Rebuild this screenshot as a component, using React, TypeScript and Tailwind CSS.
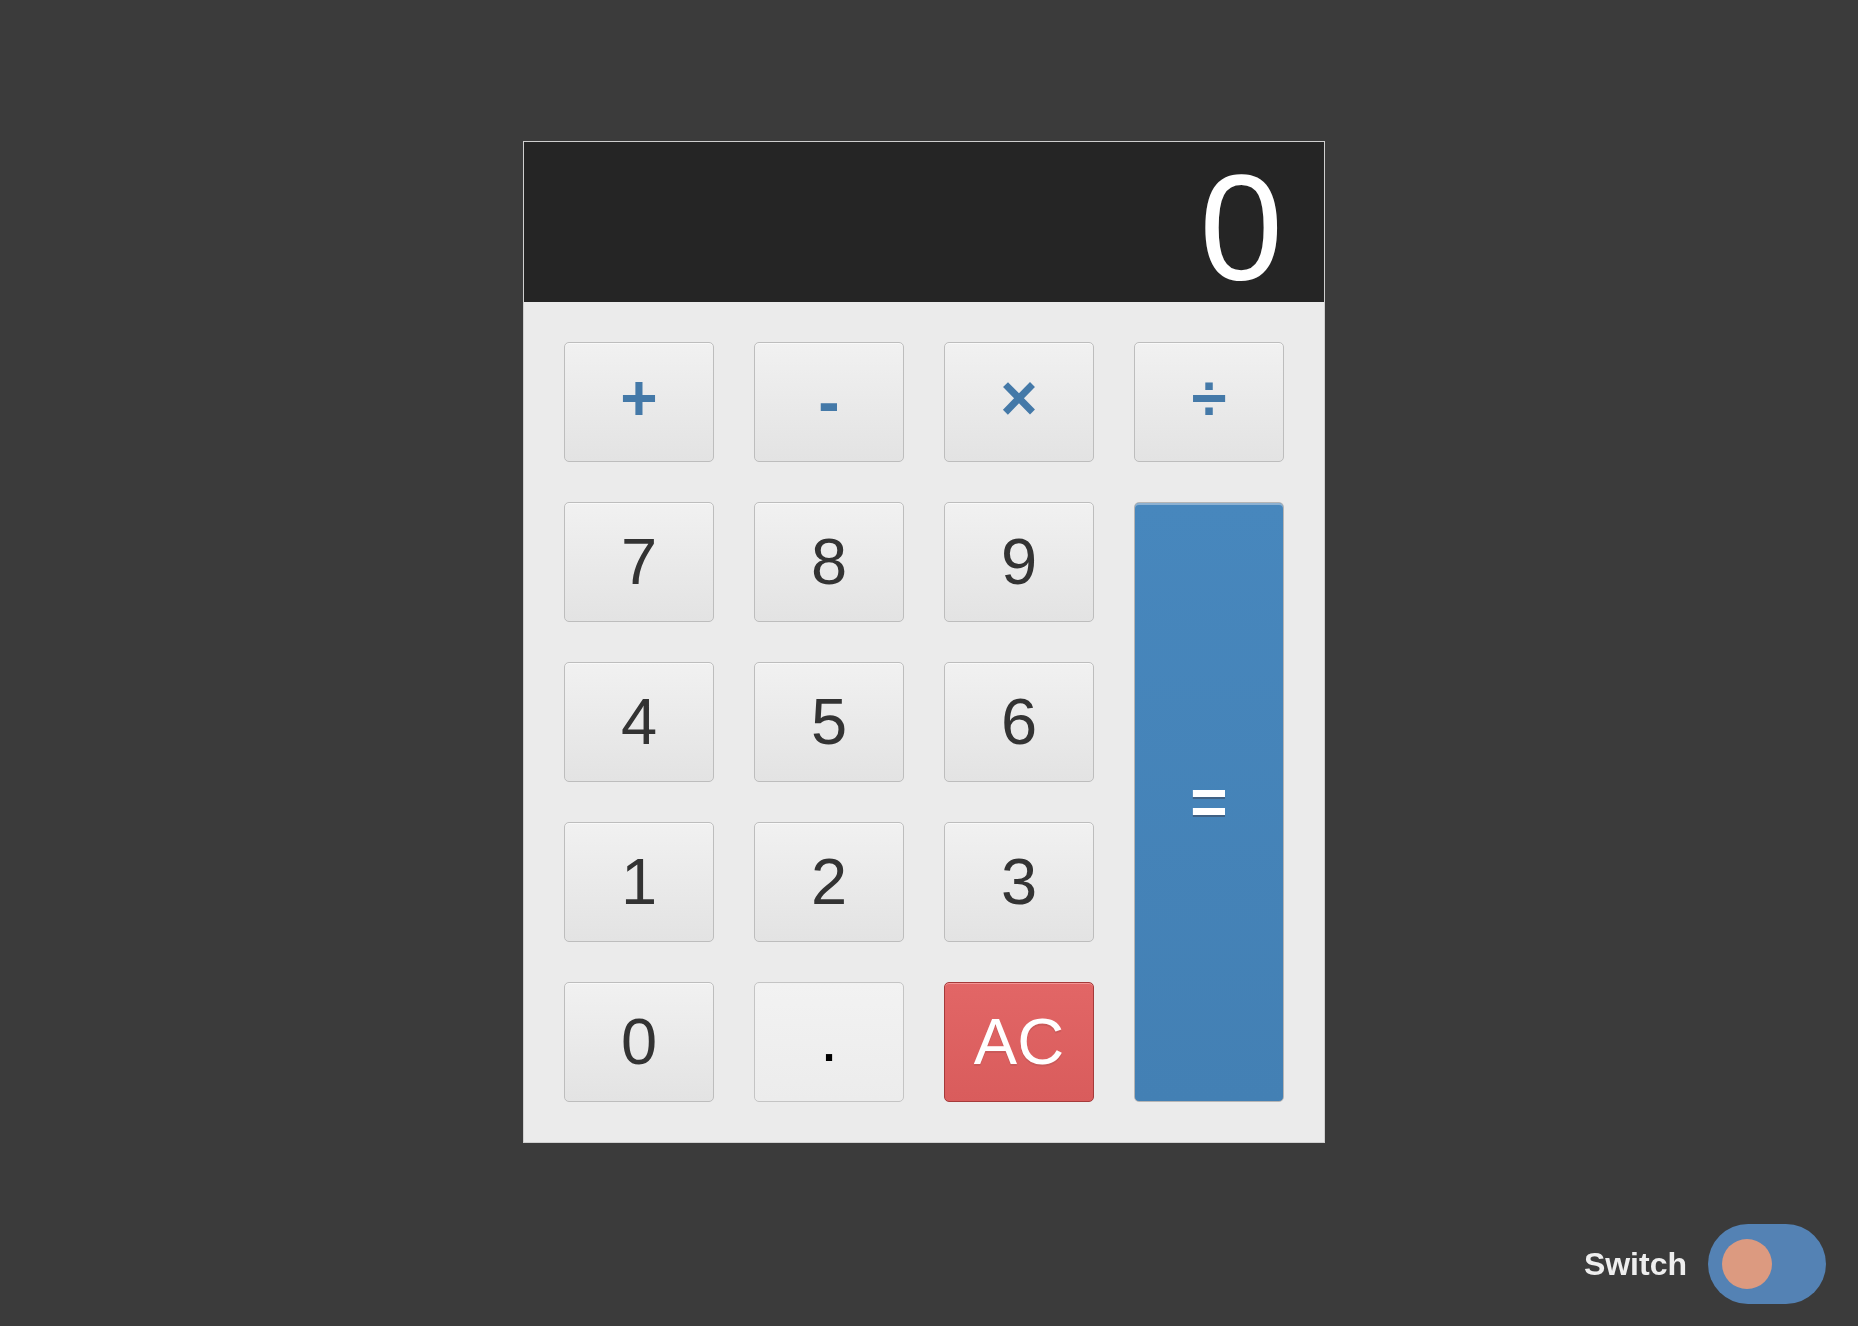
import React from "react";

const baseBtn =
  "flex items-center justify-center h-[120px] w-[150px] rounded-[5px] border border-[#bdbdbd] bg-gradient-to-b from-[#f1f1f1] to-[#e3e3e3] shadow-[inset_0_1px_0_rgba(255,255,255,0.6)]";
const numBtn = baseBtn + " text-[65px] text-[#333333]";
const opBtn = baseBtn + " text-[64px] font-bold text-[#4479a8] pb-[8px]";
const minusBtn = baseBtn + " text-[64px] font-bold text-[#4479a8]";

export default function App() {
  return (
    <div
      className="relative h-screen w-full overflow-hidden bg-[#3b3b3b] pt-[141px] pl-[523px]"
      style={{ fontFamily: '"Liberation Sans", Arial, sans-serif' }}
    >
      <div className="w-[802px] border border-[#cfcfcf] bg-[#ebebeb]">
        <div className="flex h-[160px] items-start justify-end bg-[#252525] pr-[41px] pt-[13px]">
          <span className="block text-[150px] leading-[147px] text-white">0</span>
        </div>
        <div className="grid grid-cols-[repeat(4,150px)] grid-rows-[repeat(5,120px)] gap-[40px] p-[40px]">
          <button className={opBtn}>+</button>
          <button className={minusBtn}>-</button>
          <button className={opBtn}>×</button>
          <button className={opBtn}>÷</button>
          <button className={numBtn}>7</button>
          <button className={numBtn}>8</button>
          <button className={numBtn}>9</button>
          <button className="row-span-4 flex w-[150px] items-center justify-center rounded-[5px] border border-[#b5b5b5] bg-gradient-to-b from-[#4787bd] to-[#4380b4] text-[64px] font-bold text-white shadow-[inset_0_2px_0_rgba(170,195,220,0.7)] [text-shadow:0_2px_0_rgba(60,70,90,0.55)]">
            =
          </button>
          <button className={numBtn}>4</button>
          <button className={numBtn}>5</button>
          <button className={numBtn}>6</button>
          <button className={numBtn}>1</button>
          <button className={numBtn}>2</button>
          <button className={numBtn}>3</button>
          <button className={numBtn}>0</button>
          <button className="flex h-[120px] w-[150px] items-center justify-center rounded-[5px] border border-[#c4c4c4] bg-gradient-to-b from-[#f2f2f2] to-[#ececec] pb-[6px] text-[65px] text-black">
            .
          </button>
          <button className="flex h-[120px] w-[150px] items-center justify-center rounded-[5px] border border-[#a53a3a] bg-gradient-to-b from-[#e26666] to-[#d95c5c] text-[65px] text-white shadow-[inset_0_1px_0_rgba(255,180,180,0.6)] [text-shadow:0_2px_0_rgba(200,90,90,0.9)]">
            AC
          </button>
        </div>
      </div>

      <div className="fixed bottom-[22px] right-[32px] flex items-center gap-[21px]">
        <span className="text-[32px] font-bold text-[#eeeeee]">Switch</span>
        <div className="flex h-[80px] w-[118px] items-center rounded-full bg-[#5482b4] pl-[14px]">
          <div className="h-[50px] w-[50px] rounded-full bg-[#dc9a80]" />
        </div>
      </div>
    </div>
  );
}
